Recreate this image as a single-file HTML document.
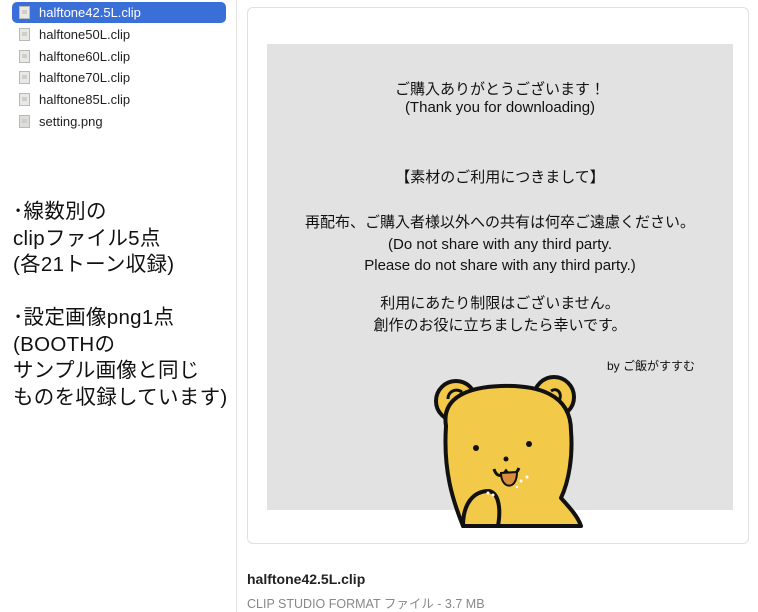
<!DOCTYPE html>
<html><head><meta charset="utf-8"><style>
*{margin:0;padding:0;box-sizing:border-box}
body{width:758px;height:612px;background:#fff;font-family:"Liberation Sans","Noto Sans CJK JP",sans-serif;position:relative;overflow:hidden;color:#222}
.side{position:absolute;left:0;top:0;width:237px;height:612px;border-right:1px solid #e2e2e2}
.row{position:absolute;left:12px;width:214px;height:21px;font-size:13px;line-height:21px;padding-left:27px;color:#222}
.row.sel{background:#3b6fd8;color:#fff;border-radius:5px}
.ic{position:absolute;left:7px;top:4px;width:11px;height:13px;background:#e8e8e6;border:1px solid #b9b9b5}
.ic:after{content:"";position:absolute;left:2px;top:3px;width:5px;height:4px;background:#cfcfc8}
.note{position:absolute;left:13px;top:199px;font-size:20.5px;line-height:26.5px;color:#111;white-space:pre;letter-spacing:0.3px}
.card{position:absolute;left:247px;top:7px;width:502px;height:537px;border:1px solid #e0e0e0;border-radius:6px;overflow:hidden}
.grey{position:absolute;left:19px;top:36px;width:466px;height:466px;background:#e2e2e2}
.t{position:absolute;left:0;width:466px;text-align:center;font-size:15px;line-height:18px;color:#111;white-space:nowrap}
.name{position:absolute;left:247px;top:571px;font-size:14px;font-weight:bold;color:#222}
.meta{position:absolute;left:247px;top:593px;font-size:12.5px;color:#888}
</style></head><body>
<div class="side">
<div class="row sel" style="top:2px"><span class="ic"></span>halftone42.5L.clip</div>
<div class="row" style="top:24px"><span class="ic"></span>halftone50L.clip</div>
<div class="row" style="top:46px"><span class="ic"></span>halftone60L.clip</div>
<div class="row" style="top:67px"><span class="ic"></span>halftone70L.clip</div>
<div class="row" style="top:89px"><span class="ic"></span>halftone85L.clip</div>
<div class="row" style="top:111px"><span class="ic" style="background:#ddd"></span>setting.png</div>
<div class="note">･線数別の
clipファイル5点
(各21トーン収録)

･設定画像png1点
(BOOTHの
サンプル画像と同じ
ものを収録しています)</div>
</div>
<div class="card">
<div class="grey">
<div class="t" style="top:37px">ご購入ありがとうございます！</div>
<div class="t" style="top:55px">(Thank you for downloading)</div>
<div class="t" style="top:125px">【素材のご利用につきまして】</div>
<div class="t" style="top:170px">再配布、ご購入者様以外への共有は何卒ご遠慮ください。</div>
<div class="t" style="top:192px">(Do not share with any third party.</div>
<div class="t" style="top:213px">Please do not share with any third party.)</div>
<div class="t" style="top:251px">利用にあたり制限はございません。</div>
<div class="t" style="top:273px">創作のお役に立ちましたら幸いです。</div>
<div class="t" style="top:315px;left:340px;width:auto;font-size:12px;line-height:14px">by ご飯がすすむ</div>
</div>
<svg style="position:absolute;left:0;top:0" width="502" height="537" viewBox="247 7 502 537">
<g stroke="#111" stroke-width="4" fill="#f3c94a" stroke-linejoin="round">
<circle cx="455" cy="400" r="20"/>
<circle cx="553" cy="396" r="20"/>
<path d="M445 425 C440 395 470 386 500 385 C535 384 570 392 570 430 C572 455 568 480 560 497 C570 508 577 516 580 525 L462 525 C452 500 442 470 445 425 Z"/>
<path d="M462 525 C462 503 472 490 488 490 C498 492 500 508 497 525 Z"/>
</g>
<path d="M447 398 C447 390 455 387 461 391 M550 390 C556 386 562 392 558 400" stroke="#111" stroke-width="3" fill="none"/>
<circle cx="475" cy="447" r="3" fill="#111"/><circle cx="528" cy="443" r="3" fill="#111"/>
<circle cx="505" cy="458" r="2.5" fill="#111"/>
<path d="M493 468 C495 475 500 477 505 470 C510 476 515 474 518 467" stroke="#111" stroke-width="3" fill="none"/>
<path d="M500 472 C500 488 516 490 516 471 Z" fill="#d88c3c" stroke="#111" stroke-width="2"/>
<g fill="#fff"><circle cx="520" cy="480" r="1.5"/><circle cx="526" cy="476" r="1.5"/><circle cx="516" cy="486" r="1.2"/><circle cx="487" cy="492" r="1.5"/><circle cx="492" cy="494" r="1.5"/></g>
</svg>
</div>
<div class="name">halftone42.5L.clip</div>
<div class="meta">CLIP STUDIO FORMAT ファイル - 3.7 MB</div>
</body></html>
